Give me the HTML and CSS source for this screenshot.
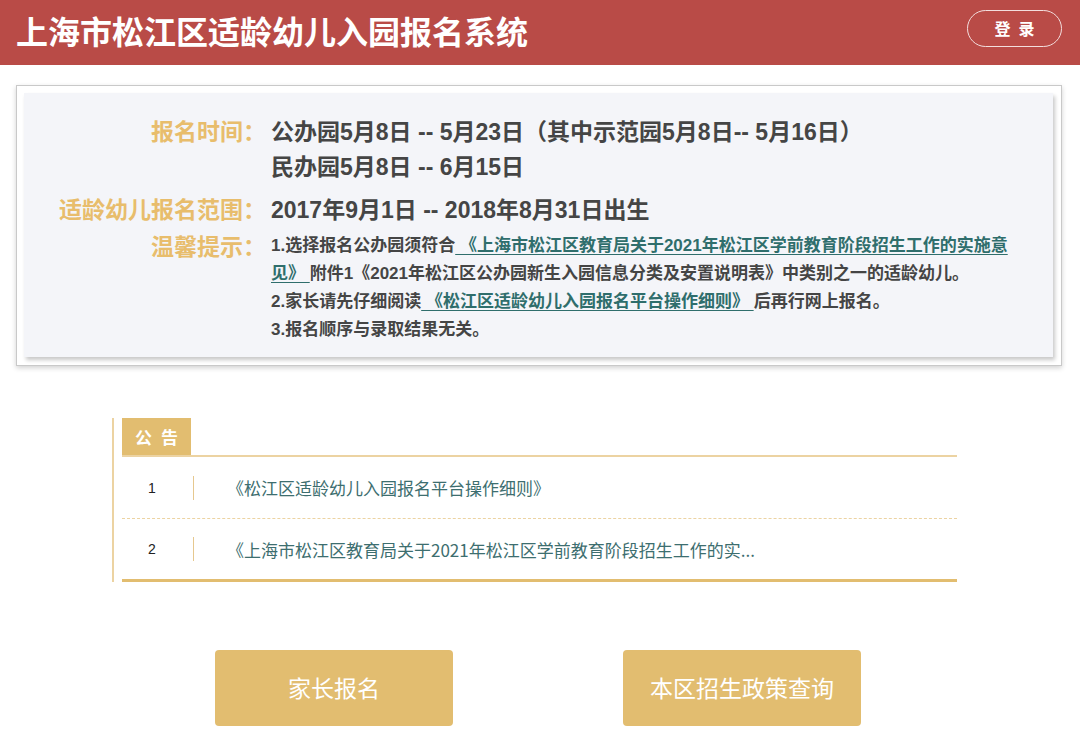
FILE: index.html
```html
<!DOCTYPE html>
<html lang="zh-CN">
<head>
<meta charset="utf-8">
<title>上海市松江区适龄幼儿入园报名系统</title>
<link rel="stylesheet" href="styles.css">
</head>
<body>
<header class="topbar">
  <h1 class="site-title">上海市松江区适龄幼儿入园报名系统</h1>
  <a class="login-btn" href="#">登录</a>
</header>

<section class="info-box">
  <div class="info-panel">
    <div class="info-row">
      <div class="info-label">报名时间：</div>
      <div class="info-value">
        <div>公办园5月8日 -- 5月23日（其中示范园5月8日-- 5月16日）</div>
        <div>民办园5月8日 -- 6月15日</div>
      </div>
    </div>
    <div class="info-row row-range">
      <div class="info-label">适龄幼儿报名范围：</div>
      <div class="info-value">2017年9月1日 -- 2018年8月31日出生</div>
    </div>
    <div class="info-row row-tips">
      <div class="info-label tips-label">温馨提示：</div>
      <div class="tips">
        <div>1.选择报名公办园须符合<a href="#"> 《上海市松江区教育局关于2021年松江区学前教育阶段招生工作的实施意<br>见》 </a>附件1《2021年松江区公办园新生入园信息分类及安置说明表》中类别之一的适龄幼儿。</div>
        <div>2.家长请先仔细阅读<a href="#"> 《松江区适龄幼儿入园报名平台操作细则》 </a>后再行网上报名。</div>
        <div>3.报名顺序与录取结果无关。</div>
      </div>
    </div>
  </div>
</section>

<section class="notice">
  <div class="notice-tab">公告</div>
  <ul class="notice-list">
    <li class="notice-item">
      <span class="notice-num">1</span>
      <span class="notice-sep"></span>
      <a class="notice-link" href="#">《松江区适龄幼儿入园报名平台操作细则》</a>
    </li>
    <li class="notice-item">
      <span class="notice-num">2</span>
      <span class="notice-sep"></span>
      <a class="notice-link" href="#">《上海市松江区教育局关于2021年松江区学前教育阶段招生工作的实...</a>
    </li>
  </ul>
</section>

<nav class="actions">
  <a class="action-btn" href="#">家长报名</a>
  <a class="action-btn" href="#">本区招生政策查询</a>
</nav>
</body>
</html>
```

FILE: styles.css
```css
* { box-sizing: border-box; }

html, body {
  margin: 0;
  padding: 0;
  background: #ffffff;
}

body {
  font-family: "Liberation Sans", "Noto Sans CJK SC", sans-serif;
  color: #454545;
  width: 1080px;
  height: 748px;
  overflow: hidden;
}

a { text-decoration: none; color: inherit; }

/* ---------- header ---------- */
.topbar {
  height: 65px;
  background: #b94b47;
  display: flex;
  align-items: center;
  justify-content: space-between;
  padding: 0 18px 0 16px;
}

.site-title {
  margin: 0;
  font-family: "Noto Sans CJK SC", sans-serif;
  font-size: 32px;
  font-weight: 700;
  letter-spacing: 0;
  color: #ffffff;
  line-height: 1;
  padding-bottom: 6px;
}

.login-btn {
  width: 95px;
  height: 37px;
  margin-top: -9px;
  border: 1.5px solid #f3dede;
  border-radius: 19px;
  display: flex;
  align-items: center;
  justify-content: center;
  color: #ffffff;
  font-family: "Noto Sans CJK SC", sans-serif;
  font-size: 16px;
  font-weight: 700;
  letter-spacing: 8px;
  padding-left: 8px;
}

/* ---------- info box ---------- */
.info-box {
  margin: 20px 18px 0 16px;
  height: 281px;
  background: #ffffff;
  border: 1px solid #c9c9c9;
  box-shadow: 0 2px 5px rgba(0, 0, 0, 0.18);
  padding: 7px 8px 8px 7px;
}

.info-panel {
  height: 264px;
  background: #f4f5f9;
  box-shadow: 2px 3px 4px rgba(0, 0, 0, 0.22);
  padding: 22px 0 12px 0;
}

.info-row {
  display: flex;
  align-items: flex-start;
}

.row-range { margin-top: 8px; }
.row-tips { margin-top: 4px; }

.info-label {
  width: 242px;
  flex: none;
  text-align: right;
  font-size: 23px;
  line-height: 35px;
  font-weight: 700;
  color: #e8bd6c;
  margin-right: 5px;
  white-space: nowrap;
}

.tips-label { line-height: 30px; }

.info-value {
  font-size: 23px;
  line-height: 35px;
  font-weight: 700;
  color: #454545;
  white-space: nowrap;
}

.tips {
  font-size: 17px;
  line-height: 28px;
  font-weight: 700;
  color: #454545;
  white-space: nowrap;
}

.tips a {
  color: #2f6e6c;
  text-decoration: underline;
  text-underline-offset: 3px;
}

/* ---------- notice ---------- */
.notice {
  margin: 52px 0 0 112px;
  width: 845px;
  border-left: 2px solid #ecd3a2;
  padding-left: 8px;
}

.notice-tab {
  width: 69px;
  height: 37px;
  background: #e2bd70;
  color: #ffffff;
  font-family: "Noto Sans CJK SC", sans-serif;
  font-size: 17px;
  font-weight: 700;
  line-height: 38px;
  letter-spacing: 9px;
  padding-left: 13px;
}

.notice-list {
  list-style: none;
  margin: 0;
  padding: 0;
  border-top: 2px solid #ecd3a2;
  border-bottom: 3px solid #e2bd70;
}

.notice-item {
  height: 61px;
  display: flex;
  align-items: center;
}

.notice-item + .notice-item {
  border-top: 1px dashed #ecd3a2;
}

.notice-num {
  width: 60px;
  text-align: center;
  font-size: 14px;
  color: #222222;
}

.notice-sep {
  width: 1px;
  height: 24px;
  margin-left: 11px;
  background: #e6c88f;
}

.notice-link {
  margin-left: 33px;
  font-family: "Noto Sans CJK SC", sans-serif;
  font-size: 17px;
  color: #3d6e6f;
  white-space: nowrap;
}

/* ---------- action buttons ---------- */
.actions {
  display: flex;
  justify-content: center;
  gap: 170px;
  margin-top: 68px;
  padding-right: 4px;
}

.action-btn {
  width: 238px;
  height: 76px;
  background: #e2bd70;
  border-radius: 4px;
  display: flex;
  align-items: center;
  justify-content: center;
  color: #ffffff;
  font-family: "Noto Sans CJK SC", sans-serif;
  font-size: 23px;
  padding-bottom: 2px;
}
```
